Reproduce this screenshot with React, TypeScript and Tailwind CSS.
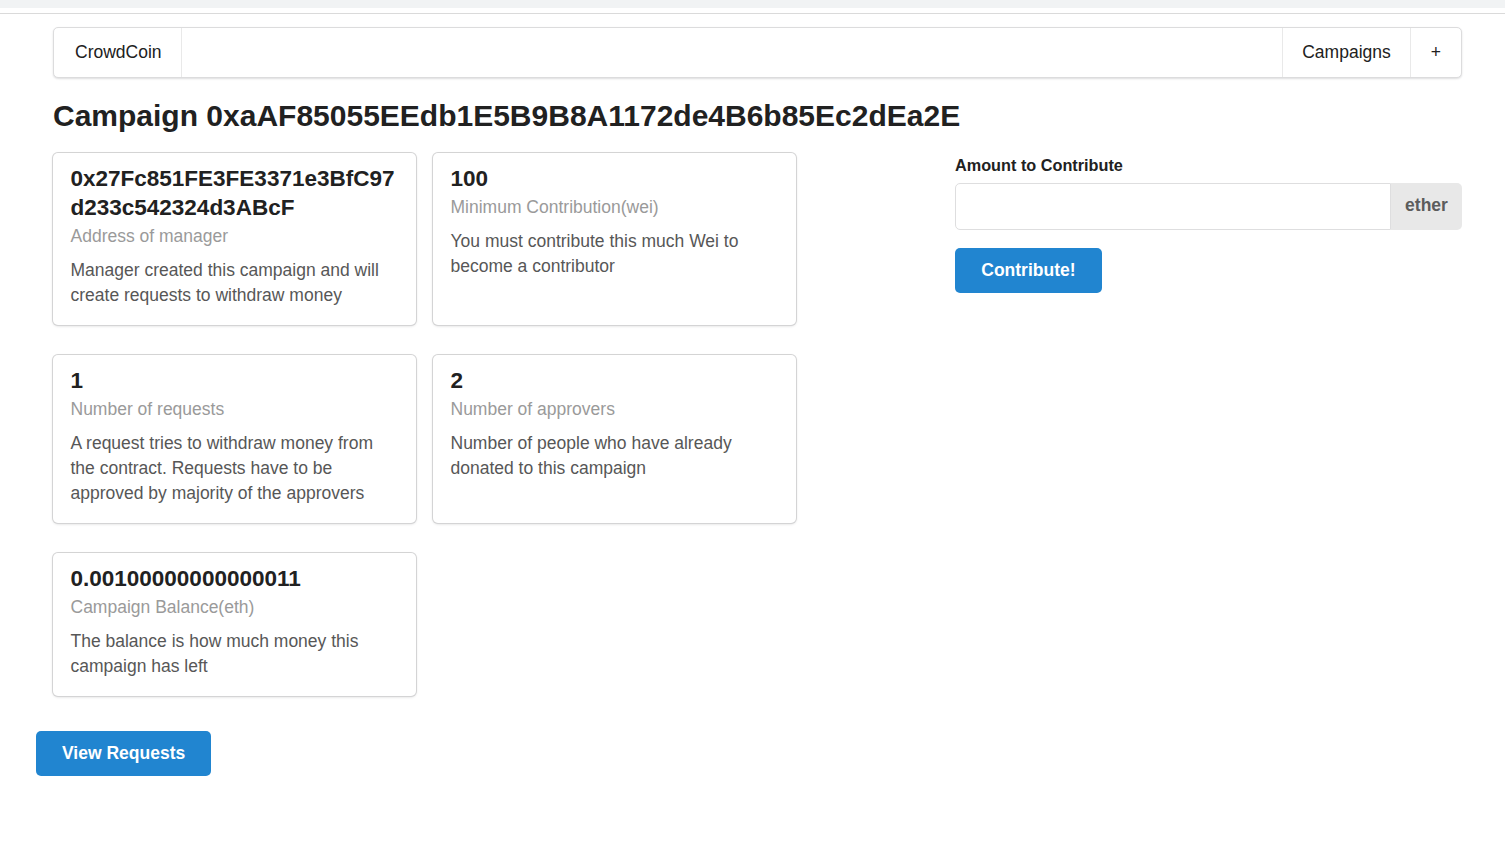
const cards = [
  {
    header: "0x27Fc851FE3FE3371e3BfC97d233c542324d3ABcF",
    meta: "Address of manager",
    description: "Manager created this campaign and will create requests to withdraw money",
  },
  {
    header: "100",
    meta: "Minimum Contribution(wei)",
    description: "You must contribute this much Wei to become a contributor",
  },
  {
    header: "1",
    meta: "Number of requests",
    description:
      "A request tries to withdraw money from the contract. Requests have to be approved by majority of the approvers",
  },
  {
    header: "2",
    meta: "Number of approvers",
    description: "Number of people who have already donated to this campaign",
  },
  {
    header: "0.001" + "0".repeat(12) + "11",
    meta: "Campaign Balance(eth)",
    description: "The balance is how much money this campaign has left",
  },
];

const Card = ({ header, meta, description }: { header: string; meta: string; description: string }) => {
  return (
    <div className="rounded-[5px] bg-white px-[17.5px] pt-[17.5px] pb-[16.5px] break-words shadow-[0_1px_3px_0_#d4d4d5,0_0_0_1px_#d4d4d5]">
      <div className="-mt-[6px] mb-[2px] text-[22.5px] font-bold leading-[29px] text-[#212121]">{header}</div>
      <div className="text-[17.5px] leading-[25px] text-[#9a9a9a]">{meta}</div>
      <div className="mt-[9px] text-[17.5px] leading-[25px] text-[#575757]">{description}</div>
    </div>
  );
};

export default function App() {
  return (
    <div className="min-h-screen bg-white font-['Liberation_Sans',Arial,sans-serif] text-[#212121]">
      {/* browser strip at the top */}
      <div className="h-[8px] bg-[#f1f3f4]" />
      <div className="h-[5px]" />
      <div className="h-px bg-[#dadada]" />

      <div className="ml-[53px] w-[1409px] pt-[13px]">
        <nav className="flex h-[51px] items-stretch rounded-[5px] border border-[#dcdcdd] bg-white text-[17.5px] shadow-[0_1px_2px_0_rgba(34,36,38,0.15)]">
          <div className="flex items-center border-r border-[#e9e9e9] pl-[21px] pr-[19px]">CrowdCoin</div>
          <div className="flex-1" />
          <div className="flex items-center border-l border-[#e9e9e9] px-[19px]">Campaigns</div>
          <div className="flex items-center border-l border-[#e9e9e9] px-[20px]">+</div>
        </nav>

        <h2 className="mt-[19px] mb-[17px] text-[30px] font-bold leading-[38.5px] text-[#212121]">
          Campaign 0xaAF85055EEdb1E5B9B8A1172de4B6b85Ec2dEa2E
        </h2>

        <div className="flex">
          <div className="w-[867px]">
            <div className="grid grid-cols-[362.5px_362.5px] gap-x-[17.5px] gap-y-[30px]">
              {cards.map((c) => (
                <Card key={c.meta} {...c} />
              ))}
            </div>
          </div>
          <div className="ml-[35px] flex-1 pt-[1px]">
            <label className="mb-[6px] block text-[16.25px] font-bold leading-[23px] text-[#212121]">
              Amount to Contribute
            </label>
            <div className="flex h-[47px]">
              <input className="flex-1 rounded-l-[5px] border border-[#dededf] px-[17.5px] text-[17.5px] outline-none" />
              <div className="flex w-[71px] items-center justify-center rounded-r-[5px] bg-[#e8e8e8] pb-[2px] text-[17.5px] font-bold text-[#5c5c5c]">
                ether
              </div>
            </div>
            <button className="mt-[18px] h-[45px] rounded-[5px] bg-[#2185d0] px-[26.25px] text-[17.5px] font-bold text-white">
              Contribute!
            </button>
          </div>
        </div>

        <button className="-ml-[17px] mt-[35px] h-[45px] rounded-[5px] bg-[#2185d0] px-[26px] text-[17.5px] font-bold text-white">
          View Requests
        </button>
      </div>
    </div>
  );
}
